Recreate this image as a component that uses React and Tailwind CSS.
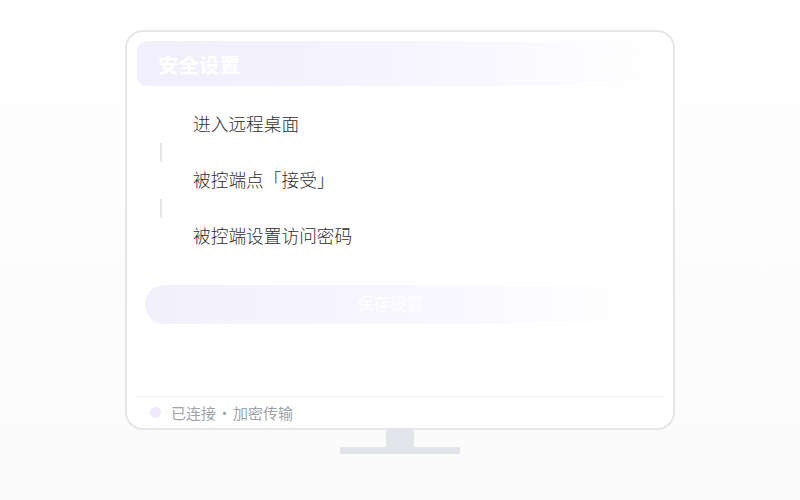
import React from "react";

export default function App() {
  const steps = ["进入远程桌面", "被控端点「接受」", "被控端设置访问密码"];
  return (
    <div
      className="w-[800px] h-[500px] bg-gradient-to-b from-white to-[#fafafa] flex flex-col items-center pt-[30px]"
      style={{ fontFamily: '"Noto Sans CJK SC", "Noto Sans", sans-serif' }}
    >
      <div className="w-[550px] h-[400px] border-2 border-[#e4e6ea] rounded-[18px] bg-white flex flex-col px-[10px] pt-[9px]">
        <div className="h-[45px] rounded-[10px] bg-gradient-to-r from-[#f1effd] via-[#f6f4fe] to-transparent flex items-center justify-between pl-[21px] pr-[20px]">
          <span className="text-white text-[20.5px] font-bold leading-none mt-[2px]">安全设置</span>
          <div className="flex items-center gap-[5px] opacity-60">
            <span className="w-[10px] h-[10px] rounded-full bg-white"></span>
            <span className="w-[10px] h-[10px] rounded-[2px] bg-white"></span>
            <span className="w-[10px] h-[10px] rounded-[2px] bg-white"></span>
          </div>
        </div>
        <div className="flex flex-col mt-[25px] pl-[56px]">
          {steps.map((s, i) => (
            <React.Fragment key={s}>
              <div className="h-[24px] flex items-center text-[17.7px] font-light text-[#2e2e2e] leading-[24px]">{s}</div>
              {i < steps.length - 1 && (
                <div className="h-[19px] w-[2px] bg-[#e6e7eb] ml-[-33px] mt-[8px] mb-[5px]"></div>
              )}
            </React.Fragment>
          ))}
        </div>
        <div className="ml-[8px] w-[490px] mt-[38px] h-[39px] rounded-full bg-gradient-to-r from-[#f3f0fd] via-[#f7f5fe] to-transparent flex items-center justify-center">
          <span className="text-white text-[16.5px] leading-none mb-[3px]">保存设置</span>
        </div>
        <div className="flex-1"></div>
        <div className="border-t border-[#f0f0f3] h-[32px] flex items-center pl-[13px] gap-[10px]">
          <span className="w-[11px] h-[11px] rounded-full bg-[#eeeafc]"></span>
          <span className="text-[15px] text-[#a0a3a8] leading-none">
            已连接<span className="mx-[1px]">·</span>加密传输
          </span>
        </div>
      </div>
      <div className="w-[28px] h-[17px] bg-[#e1e4e8]"></div>
      <div className="w-[120px] h-[7px] bg-[#e1e4e8]"></div>
    </div>
  );
}
